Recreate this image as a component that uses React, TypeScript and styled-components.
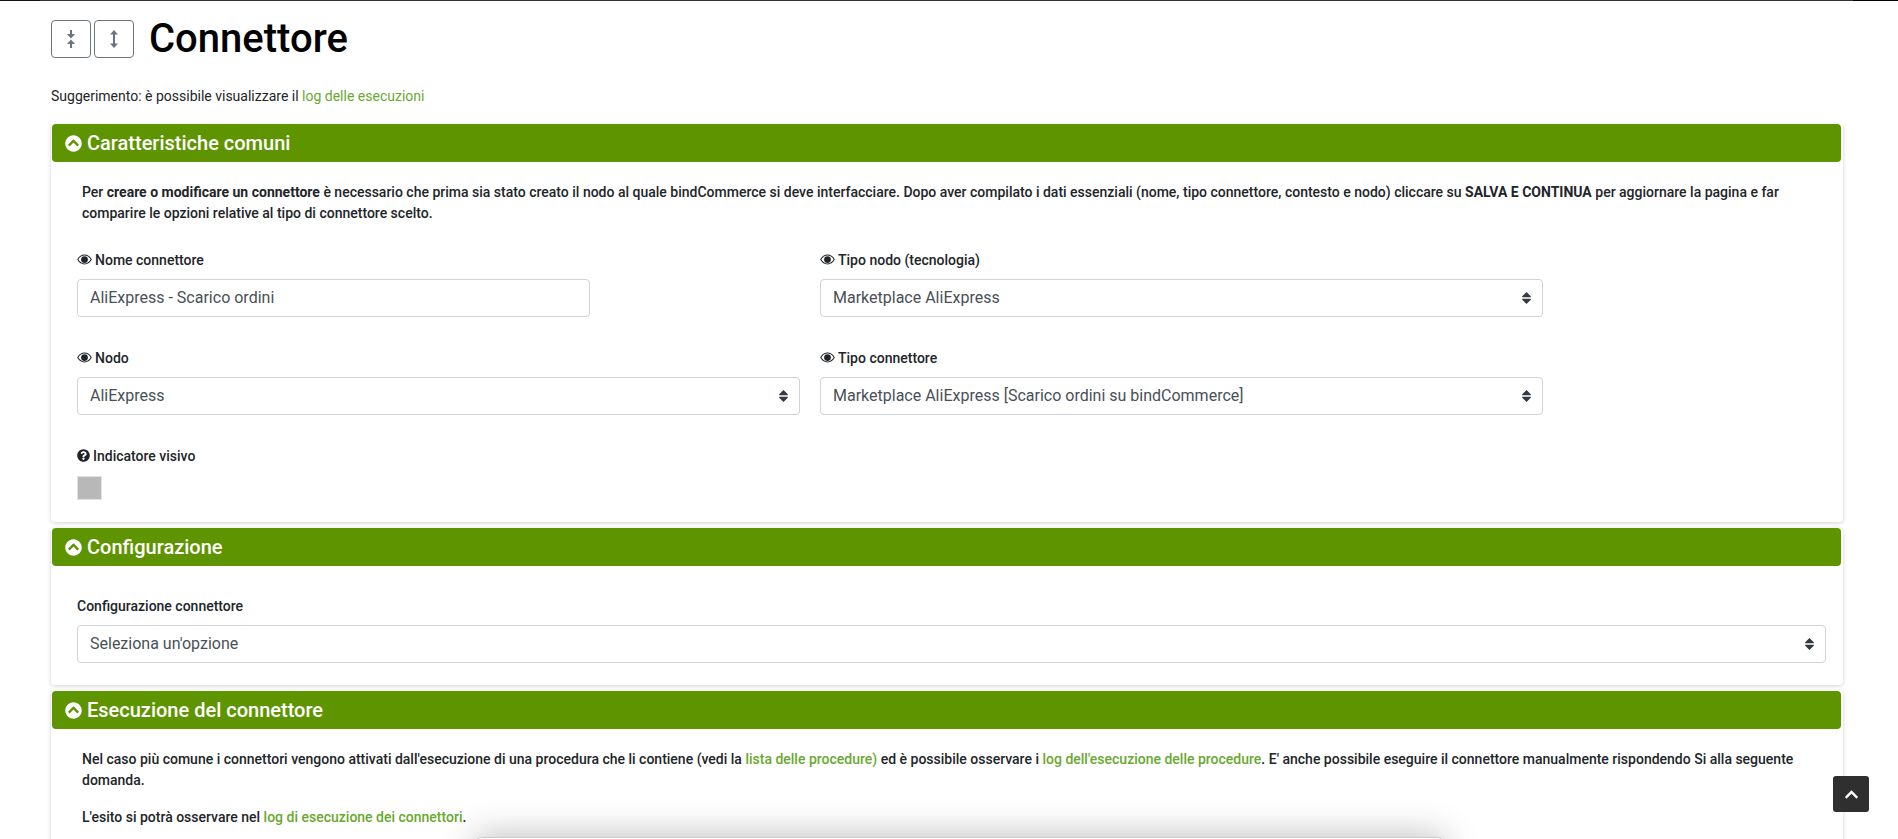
import { ReactNode } from 'react';
import { createGlobalStyle, styled } from 'styled-components';
import { FaChevronCircleUp, FaChevronUp, FaQuestionCircle } from 'react-icons/fa';

const GREEN = '#5e9400';
const LINK = '#6aa82f';

const GlobalStyle = createGlobalStyle`
    html, body {
        margin: 0;
        height: 839px;
        overflow: hidden;
        background: #fff;
    }
    body {
        font-family: Roboto, 'Liberation Sans', sans-serif;
        font-size: 14px;
        color: #212529;
    }
    * {
        box-sizing: border-box;
    }
`;

const Section = ({ title, children }: { title: string; children: ReactNode }) => (
    <Panel>
        <PanelHeader>
            <FaChevronCircleUp size={17} />
            <span>{title}</span>
        </PanelHeader>
        {children}
    </Panel>
);

const SelectField = ({ value }: { value: string }) => (
    <SelectWrap>
        <Select defaultValue={value}>
            <option>{value}</option>
        </Select>
        <Caret viewBox="0 0 10 14" aria-hidden="true">
            <path d="M5 0 10 5V6H0V5ZM0 8H10V9L5 14 0 9Z" />
        </Caret>
    </SelectWrap>
);

const EyeIcon = () => (
    <EyeSvg viewBox="0 0 16 11" aria-hidden="true">
        <path className="outline" d="M.8 5.5C2.6 2.4 5 .8 8 .8s5.4 1.6 7.2 4.7C13.4 8.6 11 10.2 8 10.2S2.6 8.6.8 5.5Z" />
        <circle cx="8" cy="5.5" r="3.6" />
    </EyeSvg>
);

const App = () => {
    return (
        <>
            <GlobalStyle />
            <TopLine />
            <Page>
                <TitleRow>
                    <IconButton aria-label="Comprimi">
                        <svg viewBox="0 0 8 18" width="8" height="18">
                            <path d="M3 0h2v4h3L4 8.5 0 4h3ZM4 9.5 8 14H5V18H3V14H0Z" />
                        </svg>
                    </IconButton>
                    <IconButton aria-label="Espandi">
                        <svg viewBox="0 0 8 18" width="8" height="18">
                            <path d="M4 0 8 4.5H5V13.5H8L4 18 0 13.5H3V4.5H0Z" />
                        </svg>
                    </IconButton>
                    <Title>Connettore</Title>
                </TitleRow>
                <Hint>
                    Suggerimento: è possibile visualizzare il <TextLink>log delle esecuzioni</TextLink>
                </Hint>

                <Section title="Caratteristiche comuni">
                    <PanelBody>
                        <Intro>
                            Per <strong>creare o modificare un connettore</strong> è necessario che prima sia stato
                            creato il nodo al quale bindCommerce si deve interfacciare. Dopo aver compilato i dati
                            essenziali (nome, tipo connettore, contesto e nodo) cliccare su{' '}
                            <strong>SALVA E CONTINUA</strong> per aggiornare la pagina e far comparire le opzioni
                            relative al tipo di connettore scelto.
                        </Intro>
                        <FieldGrid>
                            <Field>
                                <Label>
                                    <EyeIcon /> Nome connettore
                                </Label>
                                <Input defaultValue="AliExpress - Scarico ordini" />
                            </Field>
                            <Field>
                                <Label>
                                    <EyeIcon /> Tipo nodo (tecnologia)
                                </Label>
                                <SelectField value="Marketplace AliExpress" />
                            </Field>
                            <Field>
                                <Label>
                                    <EyeIcon /> Nodo
                                </Label>
                                <SelectField value="AliExpress" />
                            </Field>
                            <Field>
                                <Label>
                                    <EyeIcon /> Tipo connettore
                                </Label>
                                <SelectField value="Marketplace AliExpress [Scarico ordini su bindCommerce]" />
                            </Field>
                            <Field>
                                <Label>
                                    <FaQuestionCircle size={13} /> Indicatore visivo
                                </Label>
                                <Swatch />
                            </Field>
                        </FieldGrid>
                    </PanelBody>
                </Section>

                <Section title="Configurazione">
                    <ConfigBody>
                        <Label>Configurazione connettore</Label>
                        <SelectField value="Seleziona un'opzione" />
                    </ConfigBody>
                </Section>

                <Section title="Esecuzione del connettore">
                    <PanelBody>
                        <Intro>
                            Nel caso più comune i connettori vengono attivati dall'esecuzione di una procedura che li
                            contiene (vedi la <TextLink>lista delle procedure)</TextLink> ed è possibile osservare i{' '}
                            <TextLink>log dell'esecuzione delle procedure</TextLink>. E' anche possibile eseguire il
                            connettore manualmente rispondendo Si alla seguente domanda.
                        </Intro>
                        <Intro>
                            L'esito si potrà osservare nel <TextLink>log di esecuzione dei connettori</TextLink>.
                        </Intro>
                    </PanelBody>
                </Section>
            </Page>
            <BottomDock />
            <ScrollTop aria-label="Torna su">
                <FaChevronUp size={15} />
            </ScrollTop>
        </>
    );
};

export default App;

const TopLine = styled.div`
    height: 1px;
    background: linear-gradient(to right, #111 40px, #333 40px, #333 1853px, #000 1853px);
`;

const Page = styled.div`
    padding: 0 55px 0 51px;
`;

const TitleRow = styled.div`
    display: flex;
    align-items: center;
    gap: 3px;
    padding-top: 19px;
`;

const IconButton = styled.button`
    display: flex;
    align-items: center;
    justify-content: center;
    width: 40px;
    height: 38px;
    padding: 0;
    background: #fff;
    border: 1px solid #6c757d;
    border-radius: 4px;

    svg {
        fill: #6c757d;
    }
`;

const Title = styled.h1`
    margin: 0 0 0 12px;
    font-size: 40px;
    font-weight: 500;
    line-height: 38px;
    color: #000;
`;

const Hint = styled.p`
    margin: 28px 0 0;
    font-size: 14px;
    line-height: 21px;
`;

const TextLink = styled.a`
    color: ${LINK};
`;

const Panel = styled.section`
    margin-top: 6px;
    background: #fff;
    border-radius: 4px;
    box-shadow: 0 1px 4px rgba(0, 0, 0, 0.18);

    &:first-of-type {
        margin-top: 17px;
    }
`;

const PanelHeader = styled.header`
    display: flex;
    align-items: center;
    gap: 5px;
    height: 38px;
    margin: 0 2px 0 1px;
    padding-left: 13px;
    background: ${GREEN};
    border-radius: 4px;
    color: #fff;
    font-size: 20px;
    font-weight: 500;
`;

const PanelBody = styled.div`
    padding: 20px 18px 1px 31px;
`;

const Intro = styled.p`
    margin: 0 0 16px;
    font-size: 14px;
    font-weight: 500;
    line-height: 21px;

    strong {
        font-weight: 700;
    }
`;

const FieldGrid = styled.div`
    display: grid;
    grid-template-columns: 723px 723px;
    column-gap: 20px;
    row-gap: 30px;
    margin: 25px 0 0 -5px;
    padding-bottom: 21px;
`;

const Field = styled.div`
    display: flex;
    flex-direction: column;
    align-items: flex-start;
`;

const ConfigBody = styled.div`
    padding: 29px 17px 22px 26px;
`;

const Label = styled.label`
    display: flex;
    align-items: center;
    gap: 3px;
    height: 21px;
    margin-bottom: 9px;
    font-size: 14px;
    font-weight: 500;
    color: #212529;
`;

const EyeSvg = styled.svg`
    width: 15px;
    height: 11px;
    fill: #212529;

    .outline {
        fill: #fff;
        stroke: #212529;
        stroke-width: 1.1;
    }
`;

const controlStyles = `
    height: 38px;
    padding: 0 12px 2px;
    background: #fff;
    border: 1px solid #ced4da;
    border-radius: 4px;
    color: #495057;
    font-family: Roboto, 'Liberation Sans', sans-serif;
    font-size: 16px;
`;

const Input = styled.input`
    ${controlStyles}
    width: 513px;
`;

const SelectWrap = styled.div`
    position: relative;
    width: 100%;
`;

const Select = styled.select`
    ${controlStyles}
    display: block;
    width: 100%;
    appearance: none;
`;

const Caret = styled.svg`
    position: absolute;
    top: 13px;
    right: 12px;
    width: 9px;
    height: 12px;
    fill: #343a40;
`;

const Swatch = styled.div`
    width: 25px;
    height: 24px;
    margin-top: 1px;
    background: #b8b8b8;
    border: 1px solid #e4e4e4;
`;

const BottomDock = styled.div`
    position: fixed;
    left: 474px;
    bottom: -28px;
    width: 971px;
    height: 30px;
    background: #fff;
    border: 1px solid #ccc;
    border-radius: 8px;
    box-shadow: 0 0 36px rgba(0, 0, 0, 0.3);
`;

const ScrollTop = styled.button`
    position: fixed;
    top: 776px;
    left: 1833px;
    display: flex;
    align-items: center;
    justify-content: center;
    width: 36px;
    height: 36px;
    padding: 0;
    background: #2f2f2f;
    border: 0;
    border-radius: 3px;
    color: #fff;
`;
